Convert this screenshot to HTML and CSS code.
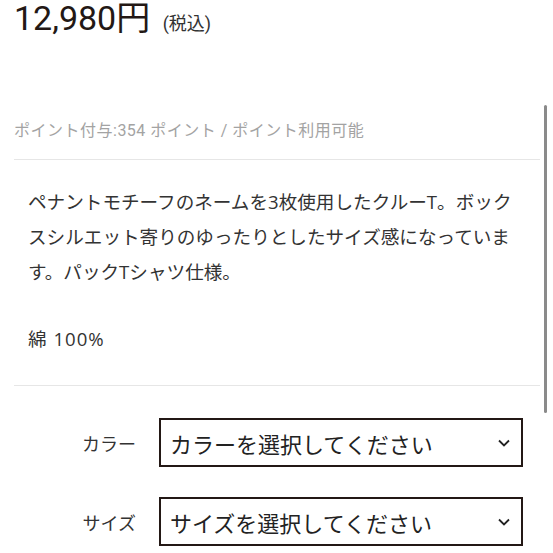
FILE: index.html
```html
<!DOCTYPE html>
<html lang="ja">
<head>
    <meta charset="UTF-8">
    <meta name="viewport" content="width=device-width, initial-scale=1.0">
    <title>商品詳細</title>
    <link rel="stylesheet" href="styles.css">
</head>
<body>

<div class="product">
    <div class="price">12,980円 <span class="tax">(税込)</span></div>

    <div class="points">ポイント付与:354 ポイント / ポイント利用可能</div>

    <div class="description">
        <p>ペナントモチーフのネームを3枚使用したクルーT。ボックスシルエット寄りのゆったりとしたサイズ感になっています。パックTシャツ仕様。</p>
        <p class="material">綿 100%</p>
    </div>

    <div class="options">
        <label class="option-label" for="color">カラー</label>
        <div class="select-wrap">
            <select id="color">
                <option>カラーを選択してください</option>
            </select>
            <svg class="chevron" width="12" height="8" viewBox="0 0 12 8"><path d="M1 1.5 6 6.5 11 1.5" fill="none" stroke="#222" stroke-width="1.8"/></svg>
        </div>

        <label class="option-label" for="size">サイズ</label>
        <div class="select-wrap">
            <select id="size">
                <option>サイズを選択してください</option>
            </select>
            <svg class="chevron" width="12" height="8" viewBox="0 0 12 8"><path d="M1 1.5 6 6.5 11 1.5" fill="none" stroke="#222" stroke-width="1.8"/></svg>
        </div>
    </div>
</div>

<div class="scroll-thumb"></div>

</body>
</html>
```

FILE: styles.css
```css
body {
    margin: 0;
    padding: 0;
    background-color: #fff;
    color: #333;
    font-family: Roboto, "Noto Sans CJK JP", sans-serif;
}

.product {
    padding: 0 13px 0 14px;
}

.price {
    font-size: 34px;
    line-height: 36px;
    color: #231815;
}

.tax {
    font-size: 18px;
    margin-left: 4px;
    color: #333;
}

.points {
    margin-top: 77px;
    font-size: 16px;
    letter-spacing: 0.5px;
    line-height: 24px;
    color: #a3a3a3;
    padding-bottom: 16px;
    border-bottom: 1px solid #e6e6e6;
}

.description {
    padding: 24px 14px 29px 14px;
    border-bottom: 1px solid #e6e6e6;
    font-family: "Open Sans", "Noto Sans CJK JP", sans-serif;
    font-size: 18.6px;
    line-height: 35px;
    color: #333;
}

.description p {
    margin: 0;
}

.description .material {
    margin-top: 32px;
    letter-spacing: 1px;
}

.options {
    display: grid;
    grid-template-columns: 122px 364px;
    column-gap: 23px;
    row-gap: 30px;
    align-items: center;
    margin-top: 32px;
}

.option-label {
    text-align: right;
    font-size: 18px;
    color: #333;
}

.select-wrap {
    position: relative;
}

.select-wrap select {
    appearance: none;
    -webkit-appearance: none;
    width: 100%;
    height: 49px;
    box-sizing: border-box;
    border: 2.5px solid #231815;
    border-radius: 0;
    background-color: #fff;
    padding: 0 40px 0 9px;
    font-family: "Noto Sans CJK JP", sans-serif;
    font-size: 22px;
    color: #222;
}

.chevron {
    position: absolute;
    right: 13px;
    top: 21px;
    pointer-events: none;
}

.scroll-thumb {
    position: absolute;
    left: 544px;
    top: 105px;
    width: 3px;
    height: 308px;
    border-radius: 2px;
    background-color: #8a8a8a;
}
```
